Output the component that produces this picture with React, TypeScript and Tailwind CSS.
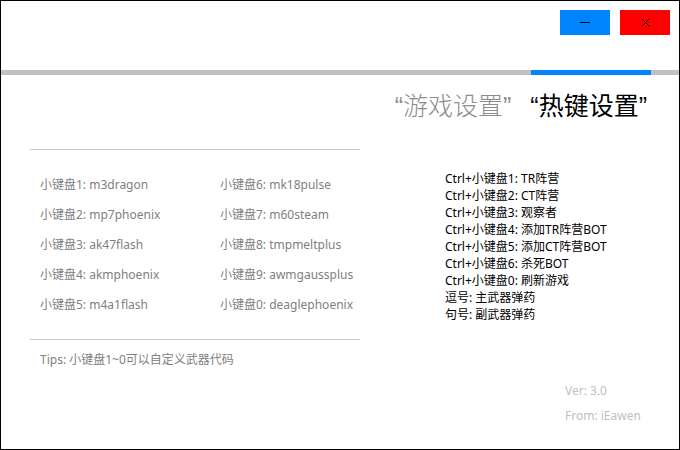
import React from "react";

const font = { fontFamily: '"Noto Sans", "Noto Sans CJK SC", sans-serif' };

const left1 = ["小键盘1: m3dragon", "小键盘2: mp7phoenix", "小键盘3: ak47flash", "小键盘4: akmphoenix", "小键盘5: m4a1flash"];
const left2 = ["小键盘6: mk18pulse", "小键盘7: m60steam", "小键盘8: tmpmeltplus", "小键盘9: awmgaussplus", "小键盘0: deaglephoenix"];
const right = [
  "Ctrl+小键盘1: TR阵营",
  "Ctrl+小键盘2: CT阵营",
  "Ctrl+小键盘3: 观察者",
  "Ctrl+小键盘4: 添加TR阵营BOT",
  "Ctrl+小键盘5: 添加CT阵营BOT",
  "Ctrl+小键盘6: 杀死BOT",
  "Ctrl+小键盘0: 刷新游戏",
  "逗号: 主武器弹药",
  "句号: 副武器弹药",
];

export default function App() {
  return (
    <div className="w-[680px] h-[450px] border border-black bg-white flex flex-col overflow-hidden" style={font}>
      <div className="h-[69px] flex justify-end items-start pt-[9px] pr-[9px] gap-[10px]">
        <div className="w-[50px] h-[25px] bg-[#0084ff] flex items-center justify-center">
          <div className="w-[10px] h-px bg-black" />
        </div>
        <div className="w-[50px] h-[25px] bg-[#ff0000] flex items-center justify-center">
          <svg width="9" height="9" viewBox="0 0 9 9" fill="none" stroke="black" strokeWidth="1">
            <path d="M0.5 0.5 L8.5 8.5 M8.5 0.5 L0.5 8.5" />
          </svg>
        </div>
      </div>
      <div className="h-[5px] bg-[#c0c0c0] flex">
        <div className="ml-[530px] w-[120px] h-full bg-[#0084ff]" />
      </div>
      <div
        className="flex justify-end pr-[32px] pt-[15px] text-[25px] leading-[32px]"
        style={{ fontFamily: '"Liberation Sans", "Noto Sans CJK SC", sans-serif' }}
      >
        <span className="text-[#8c8c8c] font-light">“游戏设置”</span>
        <span className="text-black ml-[19px]">“热键设置”</span>
      </div>
      <div className="flex mt-[27px]">
        <div className="ml-[29px] w-[330px] flex flex-col">
          <div className="h-px bg-[#c8c8c8]" />
          <div className="flex pl-[10px] pt-[26px] text-[12px] leading-[18px] text-[#808080]">
            <div className="w-[180px] flex flex-col gap-[12px]">
              {left1.map((t) => (
                <div key={t}>{t}</div>
              ))}
            </div>
            <div className="flex flex-col gap-[12px]">
              {left2.map((t) => (
                <div key={t}>{t}</div>
              ))}
            </div>
          </div>
          <div className="h-px bg-[#c8c8c8] mt-[25px]" />
          <div className="pl-[10px] pt-[11px] text-[12px] leading-[18px] text-[#808080]">Tips: 小键盘1~0可以自定义武器代码</div>
        </div>
        <div className="flex flex-col">
          <div className="ml-[85px] pt-[21px] flex flex-col text-[12px] leading-[17px] text-black">
            {right.map((t) => (
              <div key={t}>{t}</div>
            ))}
          </div>
          <div className="ml-[205px] mt-[59px] flex flex-col gap-[7px] text-[12px] leading-[18px] text-[#c0c0c0]">
            <div>Ver: 3.0</div>
            <div>From: iEawen</div>
          </div>
        </div>
      </div>
    </div>
  );
}
